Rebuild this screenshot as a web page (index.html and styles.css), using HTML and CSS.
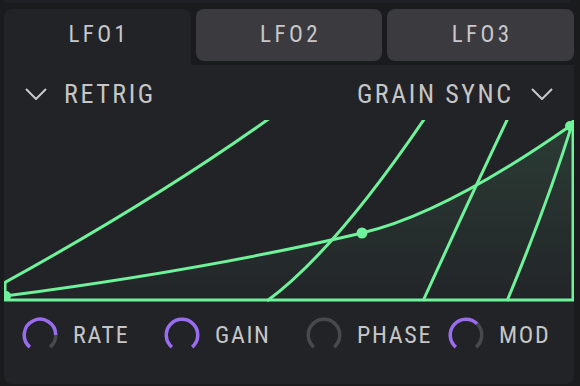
FILE: index.html
```html
<!DOCTYPE html>
<html>
<head>
<meta charset="utf-8">
<link rel="stylesheet" href="styles.css">
</head>
<body>
<div class="app">
  <div class="topbar"></div>
  <div class="panel">
    <div class="tabs">
      <div class="tab active">LFO1</div>
      <div class="tab">LFO2</div>
      <div class="tab">LFO3</div>
    </div>
    <div class="body">
      <div class="options">
        <div class="opt">
          <svg class="chev" width="22" height="12" viewBox="0 0 22 12"><polyline points="1,1 11,11 21,1"/></svg>
          <span>RETRIG</span>
        </div>
        <div class="opt">
          <span>GRAIN SYNC</span>
          <svg class="chev" width="22" height="12" viewBox="0 0 22 12"><polyline points="1,1 11,11 21,1"/></svg>
        </div>
      </div>
      <svg class="graph" width="570" height="182" viewBox="0 0 570 182">
        <defs>
          <linearGradient id="fillgrad" x1="0" y1="0" x2="0" y2="1">
            <stop offset="0" stop-color="#6ef29a" stop-opacity="0.12"/>
            <stop offset="1" stop-color="#6ef29a" stop-opacity="0.01"/>
          </linearGradient>
        </defs>
        <path class="area" d="M1,176 Q200,150 358,113 Q440,94 566,6 L569,6 L569,180 L0,180 Z"/>
        <path class="ln" d="M0,180 H569 V4"/>
        <path class="ln" d="M1,163 V180"/>
        <path class="ln" d="M0,163 Q154,78 266,-2"/>
        <path class="ln" d="M263,181 Q330,132 421,-2"/>
        <path class="ln" d="M419,181 Q465,80 504,-2"/>
        <path class="ln" d="M503,181 Q545,80 570,-2"/>
        <path class="ln" d="M1,176 Q200,150 358,113 Q440,94 566,6"/>
        <circle class="dot" cx="2" cy="176" r="5"/>
        <circle class="dot" cx="358" cy="113" r="5.5"/>
        <circle class="dot" cx="566" cy="6" r="5"/>
      </svg>
      <div class="knobs">
        <div class="knob">
          <svg width="36" height="36" viewBox="0 0 36 36">
            <path class="trk" d="M33.75,18 A15.75,15.75 0 0 1 28.12,30.06"/>
            <path class="val" d="M7.88,30.06 A15.75,15.75 0 1 1 33.75,18"/>
          </svg>
          <span>RATE</span>
        </div>
        <div class="knob">
          <svg width="36" height="36" viewBox="0 0 36 36">
            <path class="val" d="M7.88,30.06 A15.75,15.75 0 1 1 28.12,30.06"/>
          </svg>
          <span>GAIN</span>
        </div>
        <div class="knob">
          <svg width="36" height="36" viewBox="0 0 36 36">
            <path class="trk" d="M7.88,30.06 A15.75,15.75 0 1 1 28.12,30.06"/>
          </svg>
          <span>PHASE</span>
        </div>
        <div class="knob">
          <svg width="36" height="36" viewBox="0 0 36 36">
            <path class="trk" d="M29.14,6.86 A15.75,15.75 0 0 1 28.12,30.06"/>
            <path class="val" d="M7.88,30.06 A15.75,15.75 0 1 1 29.14,6.86"/>
          </svg>
          <span>MOD</span>
        </div>
      </div>
    </div>
  </div>
</div>
</body>
</html>
```

FILE: styles.css
```css
html, body {
  margin: 0;
  padding: 0;
}
body {
  width: 580px;
  height: 386px;
  overflow: hidden;
  background: #1a1b1d;
  font-family: Roboto, "Liberation Sans", sans-serif;
  font-stretch: 85%;
  color: #c6c6c6;
}
.app {
  padding-left: 4px;
}
.topbar {
  width: 566px;
  height: 3px;
  background: #1f2023;
  border-bottom-right-radius: 4px;
  margin-bottom: 6px;
}
.panel {
  width: 570px;
}
.tabs {
  display: flex;
  gap: 5px;
  height: 56px;
  align-items: flex-start;
}
.tab {
  flex: 1;
  height: 52px;
  box-sizing: border-box;
  padding: 0 0 2px 3px;
  border-radius: 8px;
  background: #3a3a3f;
  display: flex;
  align-items: center;
  justify-content: center;
  font-size: 23px;
  letter-spacing: 3.4px;
  color: #c8c8cc;
}
.tab.active {
  height: 56px;
  padding-bottom: 6px;
  background: #222327;
  border-radius: 8px 8px 0 0;
}
.body {
  height: 319px;
  background: #222327;
  border-radius: 0 0 8px 8px;
}
.options {
  height: 55px;
  box-sizing: border-box;
  padding: 2px 21px 0 21px;
  display: flex;
  justify-content: space-between;
  align-items: center;
}
.opt {
  display: flex;
  align-items: center;
  gap: 17px;
  font-size: 26px;
  letter-spacing: 2.6px;
}
.opt span {
  margin-right: -2.6px;
}
.opt:last-child {
  gap: 20px;
}
.chev {
  display: block;
}
.chev polyline {
  fill: none;
  stroke: #c9c9c9;
  stroke-width: 2;
}
.graph {
  display: block;
}
.area {
  fill: url(#fillgrad);
  stroke: none;
}
.ln {
  fill: none;
  stroke: #6ef29a;
  stroke-width: 3;
}
.dot {
  fill: #6ef29a;
}
.knobs {
  display: grid;
  grid-template-columns: repeat(4, 142px);
  padding: 15px 0 0 18px;
}
.knob {
  display: flex;
  align-items: center;
  gap: 15px;
  font-size: 24px;
  letter-spacing: 1.7px;
}
.knob svg {
  display: block;
}
.knob path {
  fill: none;
  stroke-width: 3.5;
}
.knob .val {
  stroke: #9a6cf0;
}
.knob .trk {
  stroke: #48494d;
}
```
